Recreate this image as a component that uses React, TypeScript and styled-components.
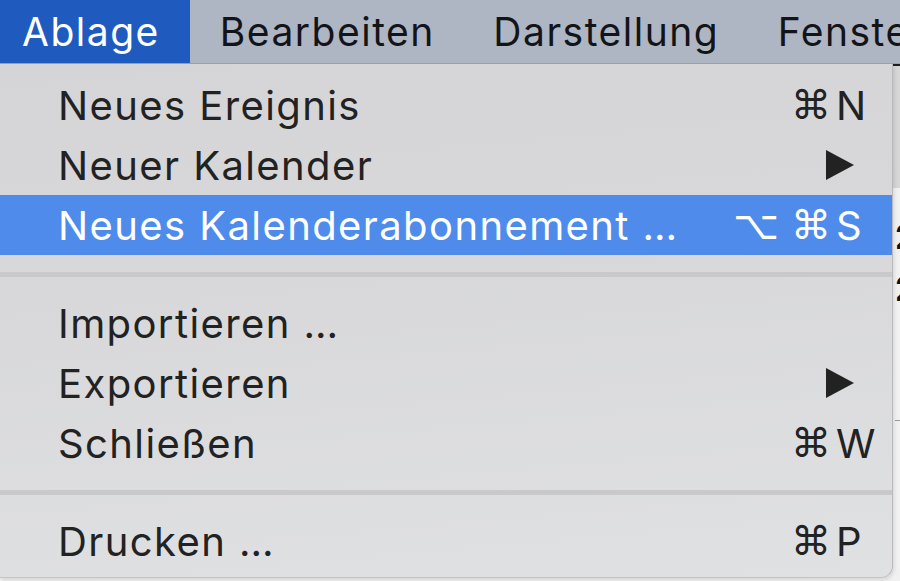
import React from "react";
import styled, { createGlobalStyle } from "styled-components";

const Global = createGlobalStyle`
  html, body { margin: 0; padding: 0; }
  body { width: 900px; height: 581px; overflow: hidden; font-family: Inter, "Liberation Sans", sans-serif; }
`;

const Screen = styled.div`
  position: relative;
  width: 900px;
  height: 581px;
  overflow: hidden;
  display: flex;
  flex-direction: column;
  background: #efefef;
`;

const MenuBar = styled.div`
  display: flex;
  height: 63px;
  background: #aeb5c3;
  border-bottom: 1px solid #9ba2ae;
  flex-shrink: 0;
  overflow: hidden;
`;

const BarItem = styled.div<{ $active?: boolean; $first?: boolean }>`
  display: flex;
  align-items: center;
  flex-shrink: 0;
  padding: 0 ${(p) => (p.$active ? "30px" : "28.5px")} 0 ${(p) => (p.$first ? "22px" : "30px")};
  background: ${(p) => (p.$active ? "#1f5bbf" : "transparent")};
  color: ${(p) => (p.$active ? "#ffffff" : "#121418")};
  font-size: 39px;
  letter-spacing: 1.5px;
  white-space: nowrap;
`;

const AppBehind = styled.div`
  flex: 1;
  display: flex;
  flex-direction: column;
`;

const AppToolbar = styled.div`
  height: 122px;
  background: #d6d6d6;
  border-top: 2px solid #1e1e1e;
`;

const AppContent = styled.div`
  flex: 1;
  display: flex;
  flex-direction: column;
  padding: 34px 0 0 895px;
  gap: 22px;
  background: #f1f1f1;
`;

const DayNum = styled.div`
  font-size: 34px;
  font-weight: 700;
  color: #111;
  line-height: 30px;
`;

const AppRule = styled.div`
  height: 1px;
  background: #9a9a9a;
  margin-top: 94px;
`;

const Dropdown = styled.div`
  position: absolute;
  top: 64px;
  left: 0;
  width: 893px;
  height: 514px;
  box-sizing: border-box;
  padding-top: 11px;
  background: linear-gradient(175deg, #d5d5d7 0%, #d8d8da 40%, #e0e1e3 100%);
  border-right: 1px solid #b9b9bb;
  border-bottom: 1px solid #c4c4c6;
  border-radius: 0 0 12px 0;
  box-shadow: 1px 2px 4px rgba(0, 0, 0, 0.12);
  display: flex;
  flex-direction: column;
`;

const Row = styled.div<{ $selected?: boolean }>`
  display: flex;
  align-items: center;
  height: 60px;
  padding-left: 58px;
  background: ${(p) => (p.$selected ? "#4e8beb" : "transparent")};
  color: ${(p) => (p.$selected ? "#ffffff" : "#222222")};
  font-size: 40px;
  letter-spacing: 1.4px;
  white-space: nowrap;
`;

const Label = styled.span`
  flex: 1;
`;

const Mods = styled.span`
  display: flex;
  gap: 12px;
  font-family: "DejaVu Sans", sans-serif;
  font-size: 40px;
  letter-spacing: 0;
  margin-right: 5px;
`;

const Key = styled.span`
  width: 56px;
  flex-shrink: 0;
  letter-spacing: 0;
`;

const Arrow = styled.svg`
  width: 28px;
  height: 30px;
  margin-right: 38px;
  flex-shrink: 0;
`;

const Separator = styled.div`
  height: 5px;
  margin: 17px 0 16px;
  background: #c9c9cb;
`;

type Item = {
  label: string;
  mods?: string[];
  key?: string;
  submenu?: boolean;
  selected?: boolean;
};

const groups: Item[][] = [
  [
    { label: "Neues Ereignis", mods: ["⌘"], key: "N" },
    { label: "Neuer Kalender", submenu: true },
    { label: "Neues Kalenderabonnement …", mods: ["⌥", "⌘"], key: "S", selected: true },
  ],
  [
    { label: "Importieren …" },
    { label: "Exportieren", submenu: true },
    { label: "Schließen", mods: ["⌘"], key: "W" },
  ],
  [{ label: "Drucken …", mods: ["⌘"], key: "P" }],
];

const MenuRow = ({ item }: { item: Item }) => (
  <Row $selected={item.selected}>
    <Label>{item.label}</Label>
    {item.mods && (
      <Mods>
        {item.mods.map((m) => (
          <span key={m}>{m}</span>
        ))}
      </Mods>
    )}
    {item.key && <Key>{item.key}</Key>}
    {item.submenu && (
      <Arrow viewBox="0 0 28 30">
        <polygon points="0,0 28,15 0,30" fill="#222" />
      </Arrow>
    )}
  </Row>
);

export default function App() {
  return (
    <>
      <Global />
      <Screen>
        <MenuBar>
          <BarItem $active $first>Ablage</BarItem>
          <BarItem>Bearbeiten</BarItem>
          <BarItem>Darstellung</BarItem>
          <BarItem>Fenster</BarItem>
        </MenuBar>
        <AppBehind>
          <AppToolbar />
          <AppContent>
            <DayNum>2</DayNum>
            <DayNum>2</DayNum>
            <AppRule />
          </AppContent>
        </AppBehind>
        <Dropdown>
          {groups.map((g, gi) => (
            <React.Fragment key={gi}>
              {gi > 0 && <Separator />}
              {g.map((it) => (
                <MenuRow key={it.label} item={it} />
              ))}
            </React.Fragment>
          ))}
        </Dropdown>
      </Screen>
    </>
  );
}
